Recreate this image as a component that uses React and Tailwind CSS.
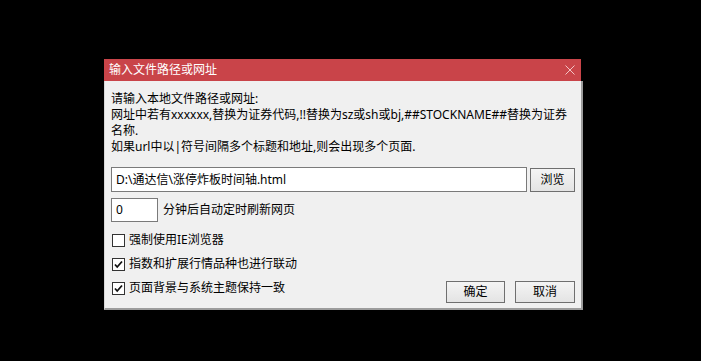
import React from 'react';

const font = "font-['Noto_Sans','Noto_Sans_CJK_SC',sans-serif]";

function Check({ checked, label }) {
    return (
        <label className="flex items-center h-[24px]">
            <span className="ml-px w-[13px] h-[13px] border border-[#333333] bg-white flex items-center justify-center">
                {checked && (
                    <svg width="9" height="9" viewBox="0 0 9 9">
                        <path d="M1 4.5 L3.2 7 L8 1.5" fill="none" stroke="#111" strokeWidth="1.8" />
                    </svg>
                )}
            </span>
            <span className="ml-[4px] text-[12px] text-black whitespace-nowrap">{label}</span>
        </label>
    );
}

function Button({ children, className }) {
    return (
        <button className={"border border-[#6f6f6f] bg-gradient-to-b from-[#f4f4f4] to-[#e4e4e4] text-[12px] text-black flex items-center justify-center " + className}>
            {children}
        </button>
    );
}

export default function App() {
    return (
        <div className={"w-[701px] h-[361px] bg-black pl-[104px] pt-[59px] " + font}>
            <div className="flex flex-col">
                {/* title bar */}
                <div className="w-[477px] h-[22px] bg-[#c94449] flex items-center justify-between pl-[5px] pr-[6px]">
                    <span className="text-white text-[12px]">输入文件路径或网址</span>
                    <svg width="10" height="10" viewBox="0 0 10 10">
                        <path d="M0.5 0.5 L9.5 9.5 M9.5 0.5 L0.5 9.5" stroke="#f2c4c5" strokeWidth="1" />
                    </svg>
                </div>

                {/* body */}
                <div className="w-[479px] h-[229px] bg-[#f0f0f0] border-l border-[#d8d8d8] border-r-2 border-r-[#9c9c9c] border-b-2 border-b-[#9c9c9c] pl-[6px] pt-[10px] pr-[6px]">
                    <div className="text-[12px] leading-[16px] text-black whitespace-nowrap">
                        <div>请输入本地文件路径或网址:</div>
                        <div>网址中若有xxxxxx,替换为证券代码,!!替换为sz或sh或bj,##STOCKNAME##替换为证券</div>
                        <div>名称.</div>
                        <div>如果url中以|符号间隔多个标题和地址,则会出现多个页面.</div>
                    </div>

                    <div className="flex items-center mt-[12px]">
                        <div className="w-[416px] h-[25px] bg-white border border-[#7a7a7a] flex items-center pl-[4px] text-[12px] text-black">
                            D:\通达信\涨停炸板时间轴.html
                        </div>
                        <Button className="ml-[3px] w-[45px] h-[24px]">浏览</Button>
                    </div>

                    <div className="flex items-center mt-[6px]">
                        <div className="w-[47px] h-[24px] bg-white border border-[#7a7a7a] flex items-center pl-[4px] text-[12px] text-black">
                            0
                        </div>
                        <span className="ml-[5px] text-[12px] text-black">分钟后自动定时刷新网页</span>
                    </div>

                    <div className="mt-[6px]">
                        <Check label="强制使用IE浏览器" />
                        <Check checked label="指数和扩展行情品种也进行联动" />
                        <div className="flex items-start justify-between">
                            <Check checked label="页面背景与系统主题保持一致" />
                            <div className="flex mt-[5px] mr-[0px]">
                                <Button className="w-[59px] h-[22px]">确定</Button>
                                <Button className="ml-[10px] w-[60px] h-[22px]">取消</Button>
                            </div>
                        </div>
                    </div>
                </div>
            </div>
        </div>
    );
}
